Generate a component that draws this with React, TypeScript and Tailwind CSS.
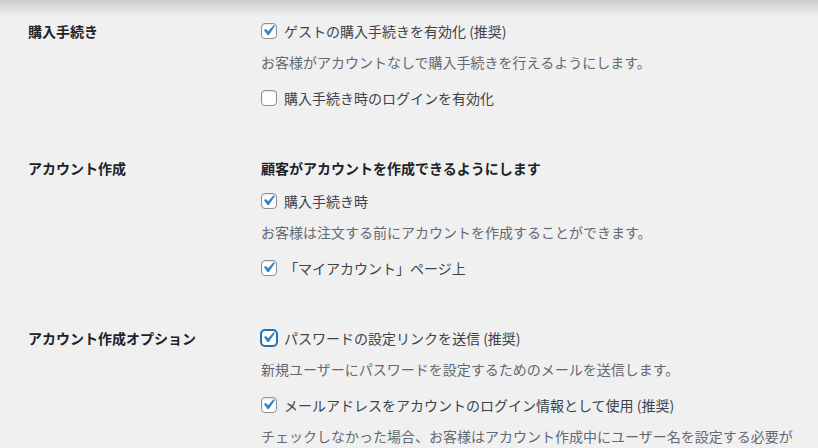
import React from 'react';

type Item =
  | { kind: 'check'; label: string; checked: boolean; focused?: boolean }
  | { kind: 'desc'; text: string }
  | { kind: 'heading'; text: string };

type Section = { title: string; items: Item[] };

const sections: Section[] = [
  {
    title: '購入手続き',
    items: [
      { kind: 'check', label: 'ゲストの購入手続きを有効化 (推奨)', checked: true },
      { kind: 'desc', text: 'お客様がアカウントなしで購入手続きを行えるようにします。' },
      { kind: 'check', label: '購入手続き時のログインを有効化', checked: false },
    ],
  },
  {
    title: 'アカウント作成',
    items: [
      { kind: 'heading', text: '顧客がアカウントを作成できるようにします' },
      { kind: 'check', label: '購入手続き時', checked: true },
      { kind: 'desc', text: 'お客様は注文する前にアカウントを作成することができます。' },
      { kind: 'check', label: '「マイアカウント」ページ上', checked: true },
    ],
  },
  {
    title: 'アカウント作成オプション',
    items: [
      { kind: 'check', label: 'パスワードの設定リンクを送信 (推奨)', checked: true, focused: true },
      { kind: 'desc', text: '新規ユーザーにパスワードを設定するためのメールを送信します。' },
      { kind: 'check', label: 'メールアドレスをアカウントのログイン情報として使用 (推奨)', checked: true },
      {
        kind: 'desc',
        text: 'チェックしなかった場合、お客様はアカウント作成中にユーザー名を設定する必要があります。',
      },
    ],
  },
];

function Checkbox({ checked, focused }: { checked: boolean; focused?: boolean }) {
  return (
    <span
      className={
        focused
          ? 'relative inline-block w-4 h-4 shrink-0 rounded-[4px] bg-white border border-[#2271b1] shadow-[0_0_0_1px_#2271b1]'
          : 'relative inline-block w-4 h-4 shrink-0 rounded-[4px] bg-white border border-[#8c8f94] shadow-[inset_0_1px_2px_rgba(0,0,0,0.1)]'
      }
    >
      {checked && (
        <svg
          viewBox="0 0 20 20"
          className="absolute w-[21px] h-[21px] left-[-4px] top-[-4px]"
        >
          <path d="M14.83 4.89l1.34.94-5.81 8.38H9.02L5.78 9.67l1.34-1.25 2.57 2.4z" fill="#3582c4" />
        </svg>
      )}
    </span>
  );
}

function Field({ item, prev }: { item: Item; prev?: Item }) {
  if (item.kind === 'heading') {
    return <div className="h-6 leading-6 font-semibold text-[#1d2327]">{item.text}</div>;
  }
  if (item.kind === 'desc') {
    return <div className="mt-[7px] leading-6 text-[#646970]">{item.text}</div>;
  }
  const gap = !prev ? '' : prev.kind === 'heading' ? 'mt-[9px]' : 'mt-[12px]';
  return (
    <label className={`flex items-center gap-[7px] h-6 text-[#3c434a] ${gap}`}>
      <Checkbox checked={item.checked} focused={item.focused} />
      <span className="leading-6">{item.label}</span>
    </label>
  );
}

export default function App() {
  return (
    <div
      className="relative w-[818px] h-[448px] overflow-hidden bg-[#f0f0f1] text-[14px]"
      style={{ fontFamily: '"Noto Sans CJK JP", "Noto Sans", sans-serif' }}
    >
      <div className="absolute inset-x-0 top-0 h-[16px] bg-gradient-to-b from-[#cbcbcc] to-[#f0f0f1]/0 pointer-events-none" />
      <div className="flex flex-col gap-[46px] pt-[19px] pl-[28px]">
        {sections.map(s => (
          <div key={s.title} className="flex">
            <div className="w-[233px] shrink-0 h-6 leading-6 font-semibold text-[#1d2327]">{s.title}</div>
            <div className="flex-1 pr-[20px]">
              {s.items.map((it, i) => (
                <Field key={i} item={it} prev={s.items[i - 1]} />
              ))}
            </div>
          </div>
        ))}
      </div>
    </div>
  );
}
